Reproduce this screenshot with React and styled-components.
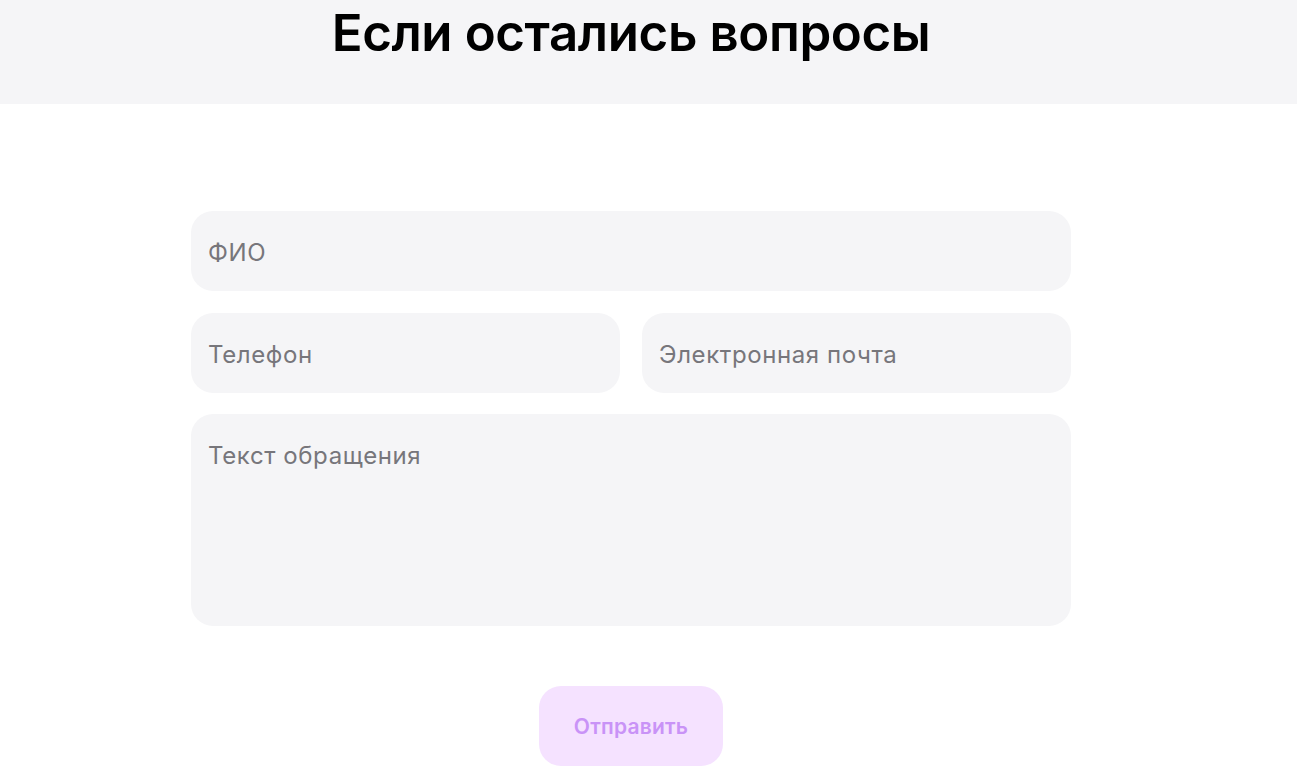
import React from 'react';
import styled, { createGlobalStyle } from 'styled-components';

const GlobalStyle = createGlobalStyle`
  html, body {
    margin: 0;
    padding: 0;
    background: #ffffff;
    font-family: Inter, "Noto Sans", sans-serif;
  }
  * { box-sizing: border-box; }
`;

const Header = styled.header`
  background: #f5f5f7;
  height: 104px;
`;

const Inner = styled.div`
  width: 1262px;
  display: flex;
  flex-direction: column;
  align-items: center;
`;

const Title = styled.h2`
  margin: 0;
  padding-top: 2px;
  font-size: 51px;
  font-weight: 600;
  line-height: 62px;
  color: #000000;
  letter-spacing: -0.4px;
`;

const Form = styled.form`
  width: 880px;
  margin-top: 107px;
  display: flex;
  flex-direction: column;
  gap: 21.5px;
`;

const Row = styled.div`
  display: grid;
  grid-template-columns: 1fr 1fr;
  gap: 22px;
`;

const Field = styled.input`
  height: 80px;
  width: 100%;
  border: none;
  outline: none;
  border-radius: 22px;
  background: #f5f5f7;
  padding: 3px 17px 0;
  font-family: Inter, "Noto Sans", sans-serif;
  font-size: 24px;
  letter-spacing: 0.6px;
  color: #333;
  &::placeholder { color: #77767b; }
`;

const Area = styled.textarea`
  height: 212px;
  width: 100%;
  border: none;
  outline: none;
  resize: none;
  border-radius: 22px;
  background: #f5f5f7;
  padding: 27px 17px;
  font-family: Inter, "Noto Sans", sans-serif;
  font-size: 24px;
  letter-spacing: 0.6px;
  color: #333;
  &::placeholder { color: #77767b; }
`;

const Submit = styled.button`
  align-self: center;
  margin-top: 38.5px;
  width: 184px;
  height: 80px;
  border: none;
  border-radius: 22px;
  background: #f5e2ff;
  color: #c993f7;
  font-family: Inter, "Noto Sans", sans-serif;
  font-size: 21px;
  font-weight: 600;
  letter-spacing: 0.2px;
  padding-top: 2px;
  cursor: default;
`;

export default function App() {
  return (
    <>
      <GlobalStyle />
      <Header>
        <Inner>
          <Title>Если остались вопросы</Title>
        </Inner>
      </Header>
      <Inner>
        <Form onSubmit={(e) => e.preventDefault()}>
          <Field placeholder="ФИО" />
          <Row>
            <Field placeholder="Телефон" />
            <Field placeholder="Электронная почта" />
          </Row>
          <Area placeholder="Текст обращения" />
          <Submit type="submit" disabled>Отправить</Submit>
        </Form>
      </Inner>
    </>
  );
}
